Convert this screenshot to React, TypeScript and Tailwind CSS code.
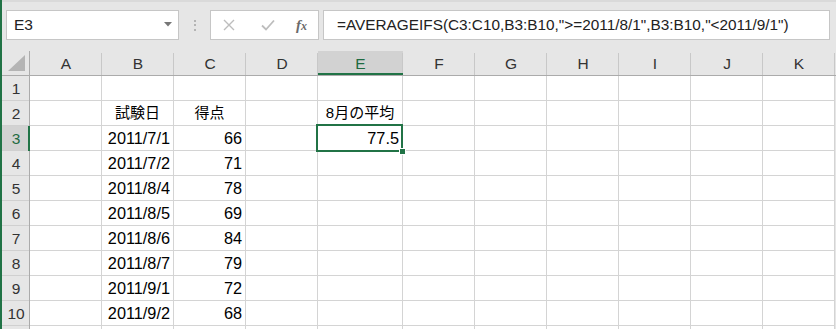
import React from "react";

const cols: { name: string; w: string }[] = [
  { name: "A", w: "w-[72px]" },
  { name: "B", w: "w-[72px]" },
  { name: "C", w: "w-[72px]" },
  { name: "D", w: "w-[72px]" },
  { name: "E", w: "w-[85px]" },
  { name: "F", w: "w-[72px]" },
  { name: "G", w: "w-[72px]" },
  { name: "H", w: "w-[72px]" },
  { name: "I", w: "w-[72px]" },
  { name: "J", w: "w-[72px]" },
  { name: "K", w: "w-[72px]" },
];

type Cell = { t: string; align: "left" | "center" | "right"; cjk?: boolean };
const data: Record<string, Record<string, Cell>> = {
  "2": {
    B: { t: "試験日", align: "center", cjk: true },
    C: { t: "得点", align: "center", cjk: true },
    E: { t: "8月の平均", align: "center", cjk: true },
  },
  "3": { B: { t: "2011/7/1", align: "right" }, C: { t: "66", align: "right" }, E: { t: "77.5", align: "right" } },
  "4": { B: { t: "2011/7/2", align: "right" }, C: { t: "71", align: "right" } },
  "5": { B: { t: "2011/8/4", align: "right" }, C: { t: "78", align: "right" } },
  "6": { B: { t: "2011/8/5", align: "right" }, C: { t: "69", align: "right" } },
  "7": { B: { t: "2011/8/6", align: "right" }, C: { t: "84", align: "right" } },
  "8": { B: { t: "2011/8/7", align: "right" }, C: { t: "79", align: "right" } },
  "9": { B: { t: "2011/9/1", align: "right" }, C: { t: "72", align: "right" } },
  "10": { B: { t: "2011/9/2", align: "right" }, C: { t: "68", align: "right" } },
};

const font = { fontFamily: '"Liberation Sans", "Noto Sans CJK JP", Arial, sans-serif' };

export default function App() {
  const rows = ["1", "2", "3", "4", "5", "6", "7", "8", "9", "10", ""];
  return (
    <div className="w-[836px] h-[329px] overflow-hidden bg-[#e6e6e6] flex relative" style={font}>
      <div className="w-[2px] shrink-0 bg-[#217346]" />
      <div className="flex flex-col flex-1 min-w-0">
        {/* formula bar */}
        <div className="h-[51px] shrink-0 flex items-start pt-[10px] border-t-2 border-[#dadada]">
          <div className="ml-[4px] w-[173px] h-[30px] -mt-[2px] bg-white border border-[#c6c6c6] flex items-center pl-[7px] pr-[6px]">
            <span className="text-[15.5px] text-[#222] flex-1">E3</span>
            <svg width="8" height="5" viewBox="0 0 8 5" className="mb-[1px]">
              <path d="M0 0 L8 0 L4 4.5 Z" fill="#777" />
            </svg>
          </div>
          <div className="w-[31px] h-[30px] -mt-[2px] flex flex-col items-center justify-center gap-[2.5px]">
            <div className="w-[2px] h-[2px] bg-[#b4b4b4]" />
            <div className="w-[2px] h-[2px] bg-[#b4b4b4]" />
            <div className="w-[2px] h-[2px] bg-[#b4b4b4]" />
          </div>
          <div className="w-[109px] h-[30px] -mt-[2px] bg-white border border-[#c6c6c6] flex items-center">
            <svg width="12" height="12" viewBox="0 0 12 12" className="ml-[12px]">
              <path d="M1 1 L11 11 M11 1 L1 11" stroke="#bdbdbd" strokeWidth="1.4" />
            </svg>
            <svg width="14" height="12" viewBox="0 0 14 12" className="ml-[26px]">
              <path d="M1 6.5 L5 10.5 L13 1.5" stroke="#bdbdbd" strokeWidth="1.8" fill="none" />
            </svg>
            <span
              className="ml-[21px] text-[15px] italic text-[#6b6b6b] font-bold leading-none"
              style={{ fontFamily: '"Liberation Serif", "Times New Roman", serif' }}
            >
              f<span className="text-[12px]">x</span>
            </span>
          </div>
          <div className="ml-[4px] w-[507px] h-[30px] -mt-[2px] bg-white border border-[#c6c6c6] flex items-center pl-[13px]">
            <span className="text-[15.35px] text-[#222] whitespace-nowrap">
              =AVERAGEIFS(C3:C10,B3:B10,"&gt;=2011/8/1",B3:B10,"&lt;2011/9/1")
            </span>
          </div>
        </div>

        {/* column header */}
        <div className="flex h-[25px] shrink-0 border-b border-[#ababab]">
          <div className="w-[28px] shrink-0 border-r border-[#ababab] relative">
            <svg width="18" height="17" viewBox="0 0 18 17" className="absolute right-[3px] bottom-[3px]">
              <path d="M17 0 L17 16 L0 16 Z" fill="#b4b4b4" />
            </svg>
          </div>
          {cols.map((c) => (
            <div
              key={c.name}
              className={`${c.w} shrink-0 flex items-center justify-center text-[15.5px] relative ${
                c.name === "E" ? "bg-[#d2d2d2] text-[#1e6b41]" : "text-[#333]"
              }`}
            >
              <span className="pt-[1px]">{c.name}</span>
              <div className="absolute right-0 top-[2px] bottom-0 w-px bg-[#c8c8c8]" />
              {c.name === "E" && <div className="absolute left-0 right-0 bottom-0 h-[2px] bg-[#217346]" />}
            </div>
          ))}
        </div>

        {/* rows */}
        <div className="flex flex-col relative">
          {rows.map((r, i) => (
            <div key={i} className="flex h-[25px] shrink-0">
              <div
                className={`w-[28px] shrink-0 border-b border-[#d0d0d0] flex items-center justify-center text-[15.5px] relative ${
                  r === "3" ? "bg-[#d2d2d2] text-[#1e6b41]" : "bg-[#e6e6e6] text-[#333]"
                }`}
              >
                <span className="pt-[1px]">{r}</span>
                <div
                  className={`absolute top-0 bottom-[-1px] right-0 ${
                    r === "3" ? "w-[2px] bg-[#217346]" : "w-px bg-[#ababab]"
                  }`}
                />
              </div>
              {cols.map((c) => {
                const cell = data[r]?.[c.name];
                return (
                  <div
                    key={c.name}
                    className={`${c.w} shrink-0 bg-white border-r border-b border-[#d4d4d4] flex items-center text-black px-[3px] pt-[1px] ${
                      cell?.cjk ? "text-[15px]" : "text-[16.3px]"
                    } ${
                      cell?.align === "right"
                        ? "justify-end"
                        : cell?.align === "center"
                        ? "justify-center"
                        : "justify-start"
                    }`}
                  >
                    {cell && <span className="whitespace-nowrap">{cell.t}</span>}
                  </div>
                );
              })}
            </div>
          ))}
          {/* selection */}
          <div className="absolute left-[314px] top-[48px] w-[87px] h-[28px] border-2 border-[#217346] pointer-events-none" />
          <div className="absolute left-[397px] top-[72px] w-[7px] h-[7px] bg-[#217346] border border-white" />
        </div>
      </div>
    </div>
  );
}
